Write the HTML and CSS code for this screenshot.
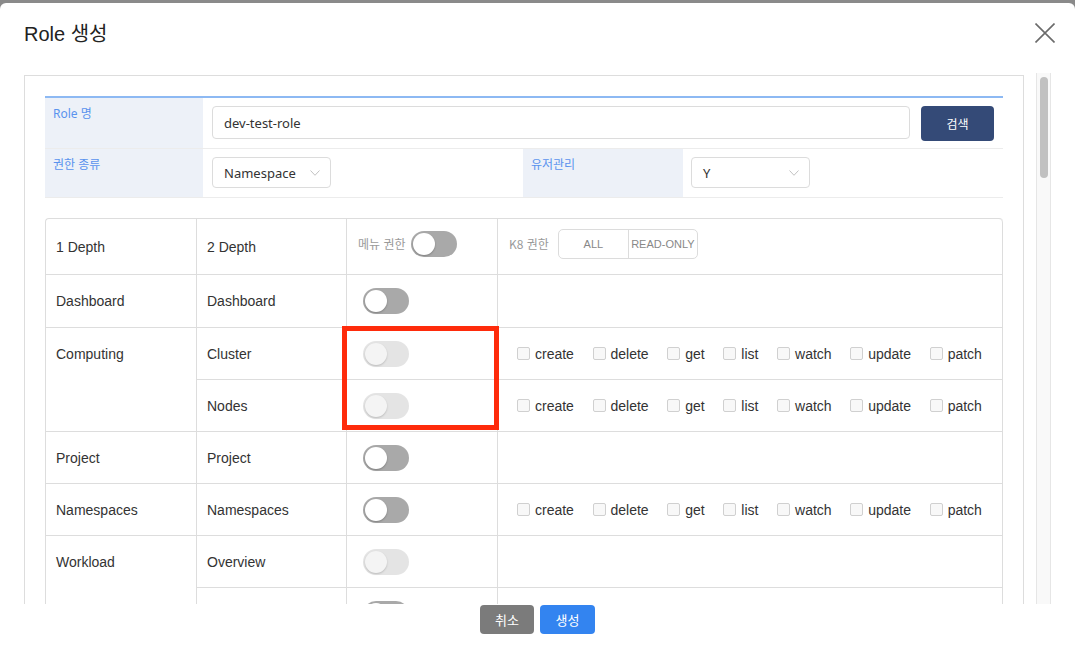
FILE: index.html
```html
<!DOCTYPE html>
<html lang="ko">
<head>
<meta charset="utf-8">
<title>Role 생성</title>
<link rel="stylesheet" href="styles.css">
</head>
<body>
<div class="modal">
  <header class="modal-head">
    <h1 class="modal-title">Role 생성</h1>
    <button class="close" aria-label="닫기">
      <svg width="20" height="20" viewBox="0 0 20 20"><path d="M0.5 0.5 L19.5 19.5 M19.5 0.5 L0.5 19.5" stroke="#6b6b6b" stroke-width="1.6" fill="none"/></svg>
    </button>
  </header>

  <div class="modal-body">
    <div class="panel">
      <div class="form">
        <div class="f-label">Role 명</div>
        <div class="f-cell f-span">
          <input class="f-input" type="text" value="dev-test-role">
          <button class="btn-search">검색</button>
        </div>
        <div class="f-label f-row2">권한 종류</div>
        <div class="f-cell f-row2">
          <div class="select">
            <span>Namespace</span>
            <svg width="10" height="6" viewBox="0 0 10 6"><path d="M0.5 0.5 L5 5.3 L9.5 0.5" stroke="#c2c2c2" stroke-width="1" fill="none"/></svg>
          </div>
        </div>
        <div class="f-label f-row2">유저관리</div>
        <div class="f-cell f-row2">
          <div class="select select-y">
            <span>Y</span>
            <svg width="10" height="6" viewBox="0 0 10 6"><path d="M0.5 0.5 L5 5.3 L9.5 0.5" stroke="#c2c2c2" stroke-width="1" fill="none"/></svg>
          </div>
        </div>
      </div>

      <div class="perm">
        <div class="c c-h">1 Depth</div>
        <div class="c c-h">2 Depth</div>
        <div class="c c-h c-head"><span class="muted">메뉴 권한</span><span class="toggle"></span></div>
        <div class="c c-h c-head c-k8"><span class="muted">K8 권한</span>
          <div class="seg"><span class="seg-item seg-all">ALL</span><span class="seg-item">READ-ONLY</span></div>
        </div>

        <div class="c">Dashboard</div>
        <div class="c">Dashboard</div>
        <div class="c c-tg"><span class="toggle"></span></div>
        <div class="c"></div>

        <div class="c c-span2">Computing</div>
        <div class="c">Cluster</div>
        <div class="c c-tg"><span class="toggle off"></span></div>
        <div class="c c-checks">
          <label class="ck"><span class="box"></span>create</label>
          <label class="ck"><span class="box"></span>delete</label>
          <label class="ck"><span class="box"></span>get</label>
          <label class="ck"><span class="box"></span>list</label>
          <label class="ck"><span class="box"></span>watch</label>
          <label class="ck"><span class="box"></span>update</label>
          <label class="ck"><span class="box"></span>patch</label>
        </div>
        <div class="c">Nodes</div>
        <div class="c c-tg"><span class="toggle off"></span></div>
        <div class="c c-checks">
          <label class="ck"><span class="box"></span>create</label>
          <label class="ck"><span class="box"></span>delete</label>
          <label class="ck"><span class="box"></span>get</label>
          <label class="ck"><span class="box"></span>list</label>
          <label class="ck"><span class="box"></span>watch</label>
          <label class="ck"><span class="box"></span>update</label>
          <label class="ck"><span class="box"></span>patch</label>
        </div>

        <div class="c">Project</div>
        <div class="c">Project</div>
        <div class="c c-tg"><span class="toggle"></span></div>
        <div class="c"></div>

        <div class="c">Namespaces</div>
        <div class="c">Namespaces</div>
        <div class="c c-tg"><span class="toggle"></span></div>
        <div class="c c-checks">
          <label class="ck"><span class="box"></span>create</label>
          <label class="ck"><span class="box"></span>delete</label>
          <label class="ck"><span class="box"></span>get</label>
          <label class="ck"><span class="box"></span>list</label>
          <label class="ck"><span class="box"></span>watch</label>
          <label class="ck"><span class="box"></span>update</label>
          <label class="ck"><span class="box"></span>patch</label>
        </div>

        <div class="c c-span2">Workload</div>
        <div class="c">Overview</div>
        <div class="c c-tg"><span class="toggle off"></span></div>
        <div class="c"></div>
        <div class="c"></div>
        <div class="c c-tg"><span class="toggle"></span></div>
        <div class="c"></div>

        <div class="highlight"></div>
      </div>
    </div>
    <div class="scrollbar"><div class="thumb"></div></div>
  </div>

  <footer class="modal-foot">
    <button class="btn btn-cancel">취소</button>
    <button class="btn btn-create">생성</button>
  </footer>
</div>
</body>
</html>
```

FILE: styles.css
```css
* { box-sizing: border-box; }

html, body {
  margin: 0;
  height: 100%;
  overflow: hidden;
}

body {
  background: #8a8a8a;
  font-family: "Liberation Sans", "Noto Sans CJK KR", sans-serif;
  color: #333;
}

.modal {
  margin-top: 3px;
  height: 651px;
  background: #fff;
  border-radius: 6px 6px 0 0;
  display: flex;
  flex-direction: column;
}

/* header */
.modal-head {
  height: 70px;
  flex-shrink: 0;
  display: flex;
  justify-content: space-between;
  align-items: flex-start;
  padding: 0 20px 0 24px;
}

.modal-title {
  margin: 0;
  padding-top: 17px;
  font-size: 20px;
  line-height: 28px;
  font-weight: normal;
  color: #222;
  font-family: "Liberation Sans", "Noto Sans CJK KR", sans-serif;
}

.close {
  margin-top: 20px;
  padding: 0;
  border: 0;
  background: none;
  width: 20px;
  height: 20px;
  display: block;
}
.close svg { display: block; }

/* body */
.modal-body {
  height: 531px;
  flex-shrink: 0;
  display: flex;
  padding-left: 24px;
  overflow: hidden;
}

.panel {
  width: 1000px;
  flex-shrink: 0;
  align-self: flex-start;
  margin-top: 2px;
  border: 1px solid #ddd;
  padding: 20px;
}

.scrollbar {
  width: 15px;
  margin-left: 12px;
  background: #f9f9f9;
  border-left: 1px solid #e6e6e6;
  border-right: 1px solid #e6e6e6;
  padding: 4px 2px 0 3px;
}
.thumb {
  width: 8px;
  height: 101px;
  border-radius: 4px;
  background: #c1c1c1;
}

/* form */
.form {
  display: grid;
  grid-template-columns: 158px 320px 160px 320px;
  grid-template-rows: 51px 49px;
  border-top: 2px solid #8db9f3;
  font-family: "Noto Sans", "Noto Sans CJK KR", sans-serif;
}

.f-label {
  background: #edf1f8;
  color: #5a93ee;
  font-size: 12px;
  line-height: 18px;
  padding: 7px 8px 0;
  border-bottom: 1px solid #ececec;
}

.f-cell {
  border-bottom: 1px solid #ececec;
  padding: 8px 9px 0;
  display: flex;
  align-items: flex-start;
}
.f-cell:last-child { padding-left: 8px; }

.f-span {
  grid-column: span 3;
  gap: 11px;
}

.f-input {
  flex: 1;
  height: 33px;
  border: 1px solid #dcdcdc;
  border-radius: 4px;
  padding: 0 11px;
  font-family: "Noto Sans", "Noto Sans CJK KR", sans-serif;
  font-size: 13px;
  color: #333;
  outline: none;
}

.btn-search {
  width: 73px;
  height: 35px;
  border: 0;
  border-radius: 4px;
  background: #344a77;
  color: #fff;
  font-family: "Noto Sans CJK KR", sans-serif;
  font-size: 12px;
}

.select {
  width: 119px;
  height: 31px;
  border: 1px solid #dcdcdc;
  border-radius: 4px;
  padding: 0 10px 0 11px;
  display: flex;
  align-items: center;
  justify-content: space-between;
  font-size: 13px;
  color: #333;
}
.select svg { display: block; }

/* permission table */
.perm {
  position: relative;
  margin-top: 20px;
  display: grid;
  grid-template-columns: 151px 150px 151px 505px;
  grid-template-rows: 56px 53px repeat(7, 52px);
  border-top: 1px solid #ddd;
  border-left: 1px solid #ddd;
  border-radius: 4px 4px 0 0;
  font-family: "Liberation Sans", "Noto Sans CJK KR", sans-serif;
  font-size: 14px;
  color: #333;
}

.c {
  border-right: 1px solid #ddd;
  border-bottom: 1px solid #ddd;
  padding: 0 10px;
  display: flex;
  align-items: center;
  line-height: 18px;
}

.c-span2 {
  grid-row: span 2;
  align-items: flex-start;
  padding-top: 17px;
}

.c-head { padding-left: 11px; padding-bottom: 5px; gap: 5px; }
.c-k8 { gap: 9px; border-top-right-radius: 4px; }

.muted {
  font-size: 12px;
  color: #9a9a9a;
  font-family: "Noto Sans CJK KR", sans-serif;
}

.c-tg { padding-left: 16px; }

.toggle {
  position: relative;
  display: block;
  width: 46px;
  height: 26px;
  border-radius: 13px;
  background: #a9a9a9;
  flex-shrink: 0;
}
.toggle::after {
  content: "";
  position: absolute;
  left: 2px;
  top: 2px;
  width: 22px;
  height: 22px;
  border-radius: 50%;
  background: #fff;
  box-shadow: 0 1px 2px rgba(0,0,0,0.25);
}
.toggle.off { background: #e4e4e4; }
.toggle.off::after { background: #f4f4f4; box-shadow: 0 1px 2px rgba(0,0,0,0.18); }

.seg {
  display: flex;
  height: 30px;
  border: 1px solid #dcdcdc;
  border-radius: 5px;
  font-size: 11px;
  color: #888;
}
.seg-item {
  display: flex;
  align-items: center;
  justify-content: center;
  width: 69px;
}
.seg-item + .seg-item { border-left: 1px solid #dcdcdc; }

.c-checks {
  padding-left: 19px;
  gap: 18.6px;
}
.ck {
  display: flex;
  align-items: center;
  gap: 5px;
}
.box {
  display: block;
  width: 13px;
  height: 13px;
  border: 1px solid #d0d0d0;
  border-radius: 2px;
  background: #f8f8f8;
}

.highlight {
  position: absolute;
  left: 296px;
  top: 107px;
  width: 157px;
  height: 104px;
  border: 5px solid #fe2b0b;
  pointer-events: none;
}

/* footer */
.modal-foot {
  flex: 1;
  display: flex;
  justify-content: center;
  align-items: flex-start;
  gap: 6px;
  padding-top: 1px;
}

.btn {
  height: 29px;
  border: 0;
  border-radius: 4px;
  color: #fff;
  font-family: "Noto Sans CJK KR", sans-serif;
  font-size: 13px;
  padding: 0;
}
.btn-cancel { width: 54px; background: #7b7b7b; }
.btn-create { width: 55px; background: #3384f0; }
```
